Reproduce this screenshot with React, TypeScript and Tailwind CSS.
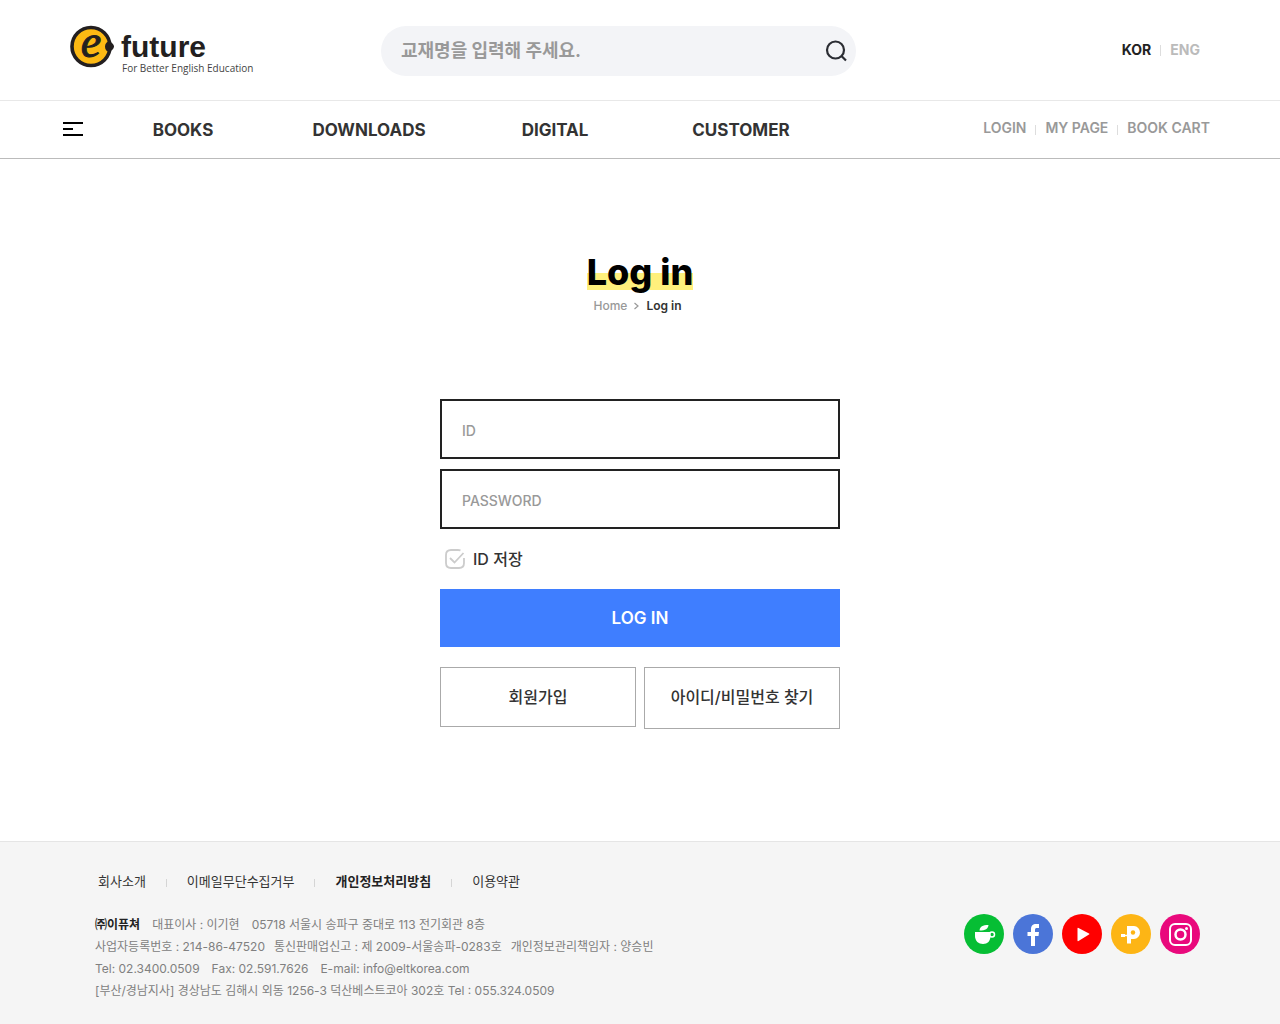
import { useState } from 'react'

const MENU = ['BOOKS', 'DOWNLOADS', 'DIGITAL', 'CUSTOMER']
const USER_LINKS = ['LOGIN', 'MY PAGE', 'BOOK CART']

function Logo() {
  return (
    <a href="#" className="flex w-[183px] shrink-0 items-start gap-[5px] whitespace-nowrap">
      <svg width="46" height="44" viewBox="0 0 46 44" aria-hidden="true" className="shrink-0 overflow-visible">
        <circle cx="21" cy="20.500" r="19" fill="#fdb913" stroke="#231f20" strokeWidth="3.600" />
        <path d="M35 20.500c0-3 2-5 4-5 2.500.5 5 3 5 5s-2 4.500-5 5c-2.500 0-4-2-4-5z" fill="#231f20" />
        <text x="21" y="31" textAnchor="middle" fontFamily="Liberation Serif, serif" fontStyle="italic" fontWeight="400" fontSize="46" fill="#231f20" stroke="#231f20">e</text>
      </svg>
      <span className="flex flex-col text-[#231f20]">
        <span className="pt-[5px] font-['Liberation_Sans',sans-serif] text-[30px] leading-[32px] font-bold">future</span>
        <span className="pl-px font-['Open_Sans',sans-serif] text-[10px] leading-[10px] font-normal text-[#444]">For Better English Education</span>
      </span>
    </a>
  )
}

function Header() {
  return (
    <header className="font-semibold">
      <div className="flex h-[100px] items-start pt-[26px] pr-20 pl-[70px]">
        <Logo />
        <form onSubmit={(e) => e.preventDefault()} className="ml-32 flex h-[50px] w-[475px] items-center rounded-full bg-[#f3f4f7] pr-[9px] pl-5">
          <input type="text" aria-label="교재명" placeholder="교재명을 입력해 주세요."
            className="min-w-0 flex-1 bg-transparent pb-0.5 text-[18px] font-bold outline-none placeholder:text-[#999]" />
          <button type="submit" aria-label="검색">
            <svg width="22" height="22" viewBox="0 0 22 22" fill="none" stroke="#2b2d33" strokeWidth="2.200">
              <circle cx="10.500" cy="10" r="8.500" />
              <path d="M16.500 16l4.500 4.500" />
            </svg>
          </button>
        </form>
        <div className="ml-auto flex h-12 items-center text-[14px] leading-5 font-bold">
          <a href="#" className="text-[#222]">KOR</a>
          <span className="mx-[9px] h-[11px] w-px bg-[#ddd]" />
          <a href="#" className="text-[#bbb]">ENG</a>
        </div>
      </div>
      <nav className="flex h-[59px] items-center border-t border-b border-t-[#e8e8e8] border-b-[#bbb] pr-[70px] pl-[63px]">
        <button type="button" aria-label="전체 메뉴" className="mr-[7px] pb-0.5">
          <svg width="20" height="14" viewBox="0 0 20 14" fill="#000">
            <path d="M0 0h20v2H0zM0 6h10v2H0zM0 12h20v2H0z" />
          </svg>
        </button>
        <ul className="flex pt-0.5">
          {MENU.map((m) => (
            <li key={m} className="w-[186px] text-center text-[17px] font-bold text-[#333]"><a href="#">{m}</a></li>
          ))}
        </ul>
        <ul className="ml-auto flex pb-1 text-[14px] leading-5 text-[#999]">
          {USER_LINKS.map((l, i) => (
            <li key={l} className="flex items-center">
              {i > 0 && <span className="mx-[9px] mt-1 h-[10px] w-px bg-[#ddd]" />}
              <a href="#">{l}</a>
            </li>
          ))}
        </ul>
      </nav>
    </header>
  )
}

function LoginForm() {
  const [form, setForm] = useState({ id: '', password: '', save: false })

  return (
    <form onSubmit={(e) => e.preventDefault()} className="mx-auto mt-[83px] w-full max-w-[400px]">
      <input type="text" aria-label="ID" placeholder="ID" value={form.id} onChange={(e) => setForm({ ...form, id: e.target.value })}
        className="block h-[60px] w-full border-2 border-[#222] px-5 pt-0.5 text-[14px] font-medium outline-none placeholder:text-[#999]" />
      <input type="password" aria-label="PASSWORD" placeholder="PASSWORD" value={form.password} onChange={(e) => setForm({ ...form, password: e.target.value })}
        className="mt-[10px] block h-[60px] w-full border-2 border-[#222] px-5 pt-0.5 text-[14px] font-medium outline-none placeholder:text-[#999]" />
      <label className="flex h-[60px] w-fit items-center gap-2 pl-[5px] text-[16px] font-medium text-[#333]">
        <span className="grid">
          <input type="checkbox" checked={form.save} onChange={(e) => setForm({ ...form, save: e.target.checked })}
            className="peer col-start-1 row-start-1 size-5 appearance-none" />
          <svg viewBox="0 0 20 20" fill="none" stroke="currentColor" strokeWidth="1.800"
            className="pointer-events-none col-start-1 row-start-1 size-5 text-[#ccc] peer-checked:text-[#3f7eff]">
            <path d="M15.500 1.300Q14.500 1 13 1H6Q1 1 1 6v8q0 5 5 5h8q5 0 5-5V9" />
            <path d="M5 9l4.500 4.500L18.500 4" />
          </svg>
        </span>
        ID 저장
      </label>
      <button type="submit" className="block h-[58px] w-full bg-[#3f7eff] pt-0.5 text-[17px] font-semibold text-white">LOG IN</button>
      <div className="mt-5 grid grid-cols-2 items-start gap-2 text-[16px] font-medium text-[#333]">
        <button type="button" className="h-[60px] border border-[#aaa]">회원가입</button>
        <button type="button" className="h-[62px] border border-[#aaa] pb-0.5">아이디/비밀번호 찾기</button>
      </div>
    </form>
  )
}

const FOOTER_LINKS = [
  { label: '회사소개' },
  { label: '이메일무단수집거부' },
  { label: '개인정보처리방침', bold: true },
  { label: '이용약관' },
]

const SOCIALS = [
  {
    name: 'Naver Cafe', bg: '#06be34',
    icon: <>
      <path d="M11 18h15.500v4c0 5-3 8-7.500 8s-8-3-8-8z" fill="#fff" />
      <path d="M15.500 16.500c.5-4 3-5.500 9-5.500-.5 4-3 5.500-9 5.500z" fill="#fff" />
      <circle cx="28" cy="20.500" r="2.500" fill="none" stroke="#fff" strokeWidth="1.500" />
    </>,
  },
  {
    name: 'Facebook', bg: '#4b75d8',
    icon: <path d="M18 32V22h-3.500v-4H18v-2.500c0-4 2-5.500 5-5.500h3v4h-2c-1.500 0-2 .5-2 2v2h4l-.5 4H22v10z" fill="#fff" />,
  },
  { name: 'YouTube', bg: '#ff0000', icon: <path d="M15.500 14.500q0-1 1-.5l10.500 5.500q1 .5 0 1L16.500 27q-1 .5-1-.5z" fill="#fff" /> },
  {
    name: 'Naver Post', bg: '#fdb515',
    icon: <>
      <path d="M16 12h7a6 6.500 0 0 1 0 13h-3v4.500h-4z" fill="#fff" />
      <circle cx="22" cy="18.500" r="2.200" fill="#fdb515" />
      <path d="M10 21.500h4" stroke="#fff" strokeWidth="3" />
      <path d="M13 21.500h4" stroke="#fff" strokeWidth="1.500" />
    </>,
  },
  {
    name: 'Instagram', bg: '#e9097c',
    icon: <>
      <rect x="10" y="10" width="21" height="21" rx="5" fill="none" stroke="#fff" strokeWidth="2" />
      <circle cx="20.500" cy="20.500" r="5" fill="none" stroke="#fff" strokeWidth="2.500" />
      <circle cx="26.500" cy="14.500" r="1.500" fill="#fff" />
    </>,
  },
]

function Footer() {
  return (
    <footer className="flex items-start justify-between border-t border-[#e5e5e5] bg-[#f5f5f5] pt-7 pr-20 pb-[22px] pl-[95px]">
      <div>
        <ul className="flex pl-[3px] text-[13px] leading-[22px] text-[#333]">
          {FOOTER_LINKS.map((l, i) => (
            <li key={l.label} className="flex items-center">
              {i > 0 && <span className="mx-5 mt-1 h-2 w-px bg-[#d5d5d5]" />}
              <a href="#" className={l.bold ? 'font-bold text-[#222]' : ''}>{l.label}</a>
            </li>
          ))}
        </ul>
        <address className="mt-[22px] text-[12px] leading-[22px] text-[#808080] not-italic">
          <p className="flex gap-3">
            <strong className="text-[#222]">㈜이퓨쳐</strong><span>대표이사 : 이기현</span><span>05718 서울시 송파구 중대로 113 전기회관 8층</span>
          </p>
          <p className="flex gap-[9px]">
            <span>사업자등록번호 : 214-86-47520</span><span>통신판매업신고 : 제 2009-서울송파-0283호</span><span>개인정보관리책임자 : 양승빈</span>
          </p>
          <p className="flex gap-3">
            <span>Tel: 02.3400.0509</span><span>Fax: 02.591.7626</span><span>E-mail: info@eltkorea.com</span>
          </p>
          <p>[부산/경남지사] 경상남도 김해시 외동 1256-3 덕산베스트코아 302호 Tel : 055.324.0509</p>
        </address>
      </div>
      <ul className="mt-11 flex gap-[9px]">
        {SOCIALS.map((s) => (
          <li key={s.name}>
            <a href="#" aria-label={s.name}>
              <svg width="40" height="40" viewBox="0 0 40 40">
                <circle cx="20" cy="20" r="20" fill={s.bg} />
                {s.icon}
              </svg>
            </a>
          </li>
        ))}
      </ul>
    </footer>
  )
}

export default function App() {
  return (
    <div className="flex min-h-screen flex-col bg-white font-['Inter','Noto_Sans_CJK_KR',sans-serif]">
      <Header />
      <main className="flex-1 px-4 pt-[91px] pb-28">
        <h1 className="text-center text-[36px] leading-[44px] font-extrabold text-black">
          <span className="bg-[linear-gradient(transparent_53%,#fff07c_53%,#fff07c_92%,transparent_92%)]">Log in</span>
        </h1>
        <div className="mt-0.5 flex items-center justify-center gap-[7px] pr-[5px] text-[12px] leading-5">
          <a href="#" className="font-medium text-[#999]">Home</a>
          <svg width="5" height="8" viewBox="0 0 5 8" fill="none" stroke="#999" strokeWidth="1.200"><path d="M.5 1l3.500 3-3.500 3" /></svg>
          <span className="font-semibold text-[#333]">Log in</span>
        </div>
        <LoginForm />
      </main>
      <Footer />
    </div>
  )
}
